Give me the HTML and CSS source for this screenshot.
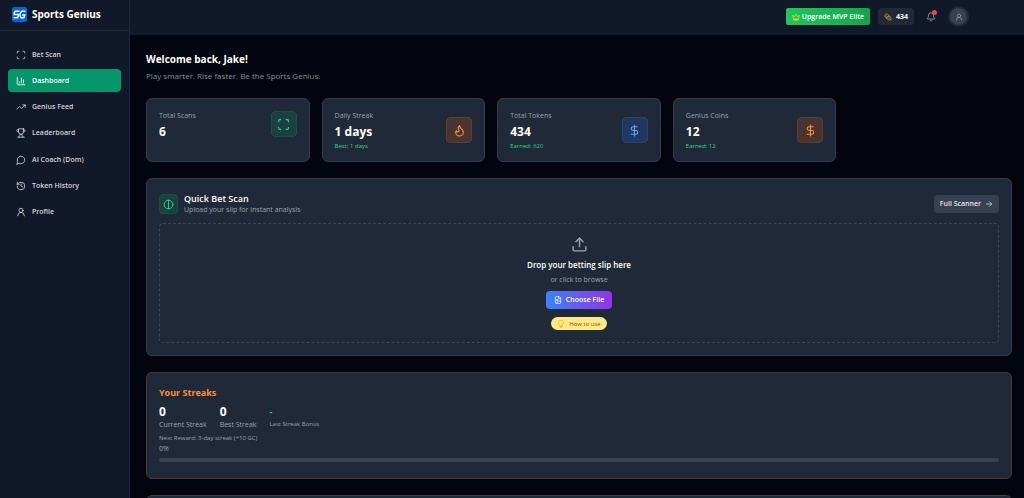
FILE: index.html
```html
<!DOCTYPE html>
<html lang="en">
<head>
	<meta charset="utf-8">
	<meta name="viewport" content="width=device-width, initial-scale=1">
	<title>Sports Genius</title>
	<link rel="stylesheet" href="styles.css">
</head>
<body>
	<svg class="sprite" aria-hidden="true">
		<symbol id="scan" viewBox="0 0 24 24"><path d="M3 7V5a2 2 0 0 1 2-2h2M17 3h2a2 2 0 0 1 2 2v2M21 17v2a2 2 0 0 1-2 2h-2M7 21H5a2 2 0 0 1-2-2v-2"/></symbol>
		<symbol id="user" viewBox="0 0 24 24"><circle cx="12" cy="8" r="5"/><path d="M20 21a8 8 0 0 0-16 0"/></symbol>
		<symbol id="dollar" viewBox="0 0 24 24"><path d="M12 2v20M17 5H9.500a3.500 3.500 0 0 0 0 7h5a3.500 3.500 0 0 1 0 7H6"/></symbol>
	</svg>
	<aside class="sidebar">
		<div class="brand">
			<svg class="logo" viewBox="0 0 28 28" aria-hidden="true">
				<rect width="28" height="28" rx="4" fill="#0866dc"/>
				<path d="M14 8H6L4 11v3h8v3l-2 3H3M25 8h-7l-3 4v5l2 3h5l2-5h-5" fill="none" stroke="#fff" stroke-width="2.500"/>
			</svg>
			<span>Sports Genius</span>
		</div>
		<nav class="nav">
			<a href="#"><svg class="icon"><use href="#scan"/></svg>Bet Scan</a>
			<a href="#" class="active"><svg class="icon" viewBox="0 0 24 24"><path d="M3 3v16a2 2 0 0 0 2 2h16M18 17V9M13 17V5M8 17v-3"/></svg>Dashboard</a>
			<a href="#"><svg class="icon" viewBox="0 0 24 24"><path d="M22 7l-8.500 8.500-5-5L2 17M16 7h6v6"/></svg>Genius Feed</a>
			<a href="#"><svg class="icon" viewBox="0 0 24 24"><path d="M6 9H4.500a2.500 2.500 0 0 1 0-5H6M18 9h1.500a2.500 2.500 0 0 0 0-5H18M4 22h16M10 14.660V17c0 .55-.47.98-.97 1.210C7.850 18.750 7 20.240 7 22M14 14.660V17c0 .55.47.98.97 1.210C16.150 18.750 17 20.240 17 22M18 2H6v7a6 6 0 0 0 12 0V2Z"/></svg>Leaderboard</a>
			<a href="#"><svg class="icon" viewBox="0 0 24 24"><path d="M7.900 20A9 9 0 1 0 4 16.100L2 22Z"/></svg>AI Coach (Dom)</a>
			<a href="#"><svg class="icon" viewBox="0 0 24 24"><path d="M3 12a9 9 0 1 0 9-9 9.750 9.750 0 0 0-6.740 2.740L3 8M3 3v5h5M12 7v5l4 2"/></svg>Token History</a>
			<a href="#"><svg class="icon"><use href="#user"/></svg>Profile</a>
		</nav>
	</aside>
	<div class="page">
		<header class="topbar">
			<button type="button" class="upgrade">
				<svg class="crown" viewBox="0 0 24 24" aria-hidden="true"><path d="M2 6l5 6 5-8 5 8 5-6-3 15H5Z" fill="none" stroke="#d9d52e" stroke-width="2.500"/><path d="M5 19h14" stroke="#d9d52e" stroke-width="5"/></svg>
				Upgrade MVP Elite
			</button>
			<div class="coins">
				<svg class="icon" viewBox="0 0 24 24"><ellipse cx="8" cy="8" rx="6" ry="5" transform="rotate(35 8 8)"/><ellipse cx="15" cy="16" rx="7" ry="5" transform="rotate(35 15 16)"/><path d="M3 11l7 8M13 5l7 8M6 7l4 3M13 15l4 3"/></svg>
				<b>434</b>
			</div>
			<button type="button" class="bell" aria-label="Notifications">
				<svg class="icon" viewBox="0 0 24 24"><path d="M10.300 21a2 2 0 0 0 3.400 0M3.300 15.300A1 1 0 0 0 4 17h16a1 1 0 0 0 .7-1.700C19.400 14 18 12.500 18 8A6 6 0 0 0 6 8c0 4.500-1.400 6-2.700 7.300"/></svg>
				<span class="dot"></span>
			</button>
			<button type="button" class="avatar" aria-label="Account"><svg class="icon"><use href="#user"/></svg></button>
		</header>
		<main class="main">
			<h1>Welcome back, Jake!</h1>
			<p class="lead">Play smarter. Rise faster. Be the Sports Genius.</p>

			<section class="stats">
				<div class="card stat">
					<div><p class="label">Total Scans</p><p class="value">6</p></div>
					<span class="tile green up"><svg class="icon"><use href="#scan"/></svg></span>
				</div>
				<div class="card stat">
					<div><p class="label">Daily Streak</p><p class="value">1 days</p><p class="note">Best: 1 days</p></div>
					<span class="tile orange"><svg class="icon" viewBox="0 0 24 24"><path d="M8.500 14.500A2.500 2.500 0 0 0 11 12c0-1.380-.5-2-1-3-1.072-2.143-.224-4.054 2-6 .5 2.500 2 4.900 4 6.500 2 1.600 3 3.500 3 5.500a7 7 0 1 1-14 0c0-1.153.433-2.294 1-3a2.500 2.500 0 0 0 2.500 2.500z"/></svg></span>
				</div>
				<div class="card stat">
					<div><p class="label">Total Tokens</p><p class="value">434</p><p class="note">Earned: 620</p></div>
					<span class="tile blue"><svg class="icon"><use href="#dollar"/></svg></span>
				</div>
				<div class="card stat">
					<div><p class="label">Genius Coins</p><p class="value">12</p><p class="note">Earned: 12</p></div>
					<span class="tile orange"><svg class="icon"><use href="#dollar"/></svg></span>
				</div>
			</section>

			<section class="card scan">
				<div class="scan-head">
					<span class="tile green small"><svg class="icon" viewBox="0 0 24 24"><circle cx="12" cy="12" r="9.500"/><path d="M12 3v18"/></svg></span>
					<div>
						<h2>Quick Bet Scan</h2>
						<p>Upload your slip for instant analysis</p>
					</div>
					<button type="button" class="full">Full Scanner <svg class="icon" viewBox="0 0 24 24"><path d="M4 12h16M13 5l7 7-7 7"/></svg></button>
				</div>
				<div class="drop">
					<svg class="icon upload" viewBox="0 0 24 24"><path d="M21 15v4a2 2 0 0 1-2 2H5a2 2 0 0 1-2-2v-4M17 8l-5-5-5 5M12 3v12"/></svg>
					<h3>Drop your betting slip here</h3>
					<p>or click to browse</p>
					<button type="button" class="choose"><svg class="icon" viewBox="0 0 24 24"><path d="M15 2H6a2 2 0 0 0-2 2v16a2 2 0 0 0 2 2h12a2 2 0 0 0 2-2V7ZM14 2v6h6M20 18l-5-5-8 9"/><circle cx="9" cy="12" r="2"/></svg>Choose File</button>
					<button type="button" class="how"><svg class="icon" viewBox="0 0 24 24"><path d="M8 17c0-4-3-5-3-9a7 7 0 0 1 14 0c0 4-3 5-3 9ZM9 20h6M10 23h4"/></svg>How to use</button>
				</div>
			</section>

			<section class="card streaks">
				<h2>Your Streaks</h2>
				<div class="streak-row">
					<div><b>0</b><span>Current Streak</span></div>
					<div><b>0</b><span>Best Streak</span></div>
					<div class="bonus"><b>-</b><span>Last Streak Bonus</span></div>
				</div>
				<p class="reward">Next Reward: 3-day streak (+10 GC)</p>
				<p class="percent">0%</p>
				<div class="bar"></div>
			</section>

			<section class="card next"></section>
		</main>
	</div>
</body>
</html>
```

FILE: styles.css
```css
*{
	box-sizing: border-box;
	margin: 0;
	padding: 0;
}
body{
	display: flex;
	height: 100vh;
	overflow: hidden;
	background: #02050f;
	color: #fff;
	font: 7px/10px "Open Sans", "Noto Sans", sans-serif;
}
button{
	font: inherit;
	font-weight: 600;
	color: inherit;
	border: 0;
	display: flex;
	align-items: center;
	cursor: pointer;
}
.sprite{
	position: absolute;
	width: 0;
	height: 0;
}
.icon{
	width: 10px;
	height: 10px;
	flex: none;
	fill: none;
	stroke: currentColor;
	stroke-width: 2;
	stroke-linecap: round;
	stroke-linejoin: round;
}

/* sidebar */
.sidebar{
	width: 130px;
	flex: none;
	background: #111827;
	border-right: 1px solid #1b2433;
}
.brand{
	display: flex;
	align-items: center;
	gap: 5px;
	height: 31px;
	padding: 0 12px 2px;
	border-bottom: 1px solid #1f2937;
	font-size: 10px;
	font-weight: 700;
}
.logo{
	width: 15px;
	height: 15px;
}
.nav{
	display: flex;
	flex-direction: column;
	justify-content: space-between;
	height: 193px;
	padding: 12px 8px 0;
}
.nav a{
	display: flex;
	align-items: center;
	gap: 6px;
	height: 23px;
	padding: 0 8px;
	border-radius: 4px;
	color: #d1d5db;
	font-weight: 600;
	text-decoration: none;
}
.nav .active{
	background: #059669;
	color: #fff;
}

/* top bar */
.page{
	flex: 1;
	min-width: 0;
	overflow: hidden;
}
.topbar{
	display: flex;
	align-items: center;
	justify-content: flex-end;
	gap: 8px;
	height: 35px;
	padding: 0 55px 2px 16px;
	background: #111827;
}
.upgrade{
	gap: 2px;
	height: 17px;
	padding: 0 6px;
	border-radius: 2px;
	background: linear-gradient(90deg, #22c55e, #16a34a);
}
.crown{
	width: 8px;
	height: 8px;
}
.coins{
	display: flex;
	align-items: center;
	gap: 4px;
	height: 17px;
	padding: 0 6px;
	border-radius: 3px;
	background: #1f2937;
}
.coins .icon{
	width: 8px;
	height: 8px;
	color: #b8952c;
}
.bell{
	position: relative;
	padding: 4px;
	background: none;
	color: #9ca3af;
}
.dot{
	position: absolute;
	top: 2px;
	right: 3px;
	width: 5px;
	height: 5px;
	border-radius: 50%;
	background: #ef4444;
}
.avatar{
	justify-content: center;
	width: 21px;
	height: 21px;
	border: 2px solid #1f2937;
	border-radius: 50%;
	background: #374151;
	color: #9ca3af;
}
.avatar .icon{
	width: 8px;
	height: 8px;
}

/* content */
.main{
	padding: 16px 12px 0 16px;
}
h1{
	font-size: 10px;
	line-height: 16px;
}
.lead{
	margin-top: 4px;
	font-size: 8px;
	color: #858c98;
}
.card{
	border: 1px solid #323c4a;
	border-radius: 6px;
	background: #1f2937;
}
.stats{
	display: grid;
	grid-template-columns: repeat(5, 1fr);
	gap: 12px;
	margin-top: 17px;
}
.stat{
	display: flex;
	justify-content: space-between;
	align-items: center;
	height: 64px;
	padding: 12px;
}
.stat > div{
	align-self: flex-start;
}
.label{
	color: #9ca3af;
}
.value{
	font-size: 12px;
	line-height: 21px;
	font-weight: 700;
}
.note{
	font-size: 6px;
	line-height: 8px;
	color: #34d399;
}
.tile{
	display: flex;
	align-items: center;
	justify-content: center;
	width: 26px;
	height: 26px;
	flex: none;
	border: 1px solid;
	border-radius: 4px;
}
.tile .icon{
	width: 13px;
	height: 13px;
}
.green{
	background: #1a4041;
	border-color: #185046;
	color: #34d399;
}
.orange{
	background: #493430;
	border-color: #5f3d2d;
	color: #fb923c;
}
.blue{
	background: #20375f;
	border-color: #234479;
	color: #60a5fa;
}
.up{
	align-self: flex-start;
}
.small{
	width: 19px;
	height: 20px;
}
.small .icon{
	width: 11px;
	height: 11px;
}
.scan{
	margin-top: 16px;
	padding: 14px 12px 12px;
}
.scan-head{
	display: flex;
	align-items: center;
	gap: 6px;
}
.scan-head h2{
	font-size: 9px;
	line-height: 12px;
	font-weight: 600;
}
.scan-head p{
	color: #9ca3af;
}
.full{
	gap: 4px;
	height: 18px;
	margin-left: auto;
	padding: 0 6px;
	border-radius: 4px;
	background: #374151;
	color: #e5e7eb;
}
.full .icon{
	width: 8px;
	height: 8px;
}
.drop{
	display: flex;
	flex-direction: column;
	align-items: center;
	margin-top: 8px;
	padding: 12px 0;
	border: 1px dashed #3b4554;
	border-radius: 4px;
}
.upload{
	width: 17px;
	height: 17px;
	color: #9ca3af;
}
.drop h3{
	margin-top: 6px;
	font-size: 8px;
	line-height: 12px;
	font-weight: 600;
}
.drop p{
	margin-top: 4px;
	color: #9ca3af;
}
.choose{
	gap: 4px;
	height: 18px;
	margin-top: 6px;
	padding: 0 8px;
	border-radius: 4px;
	background: linear-gradient(90deg, #3b82f6, #9333ea);
}
.choose .icon{
	width: 8px;
	height: 8px;
}
.how{
	gap: 4px;
	height: 13px;
	margin-top: 8px;
	padding: 0 6px;
	border-radius: 7px;
	background: #fdea85;
	color: #854d0e;
	font-size: 6px;
	font-weight: 400;
}
.how .icon{
	width: 8px;
	height: 8px;
	color: #eab308;
}
.streaks{
	margin-top: 16px;
	padding: 13px 12px 16px;
	border-color: #4b3636;
}
.streaks h2{
	font-size: 9px;
	line-height: 14px;
	color: #fb923c;
}
.streak-row{
	display: flex;
	gap: 13px;
	margin-top: 4px;
}
.streak-row b,
.streak-row span{
	display: block;
}
.streak-row b{
	font-size: 12px;
	line-height: 16px;
}
.streak-row span{
	color: #9ca3af;
}
.streak-row .bonus b{
	font-size: 9px;
	color: #34d399;
}
.streak-row .bonus span{
	font-size: 6px;
	line-height: 8px;
}
.reward{
	margin-top: 3px;
	font-size: 6px;
	color: #9ca3af;
}
.percent{
	margin-top: 1px;
	color: #9ca3af;
}
.bar{
	height: 4px;
	margin-top: 4px;
	border-radius: 2px;
	background: #374151;
}
.next{
	height: 100px;
	margin-top: 16px;
	border-color: #45413a;
}
```
